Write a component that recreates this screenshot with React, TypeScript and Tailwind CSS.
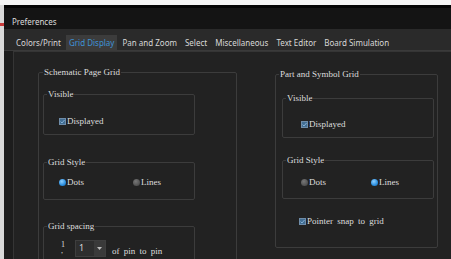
import React from "react";

const serif = { fontFamily: '"Liberation Serif", "Times New Roman", serif' };
const sans = { fontFamily: '"Noto Sans", "Liberation Sans", sans-serif' };

function Check() {
  return (
    <span className="flex h-[7px] w-[7px] shrink-0 items-center justify-center border border-[#6f8ca8] bg-[#416d92]">
      <svg width="5" height="5" viewBox="0 0 5 5">
        <path d="M0.6 2.6 L2 4 L4.5 1" stroke="#8fb8dc" strokeWidth="0.9" fill="none" />
      </svg>
    </span>
  );
}

function Radio({ on }: { on: boolean }) {
  return on ? (
    <span className="h-[7px] w-[7px] shrink-0 rounded-full bg-[radial-gradient(circle_at_40%_35%,#8fd0ff,#2a8ee0_60%,#1c6db0)]" />
  ) : (
    <span className="h-[7px] w-[7px] shrink-0 rounded-full bg-[radial-gradient(circle_at_40%_35%,#777,#555_60%,#444)]" />
  );
}

function Box({
  title,
  className,
  legendClass = "ml-[3px]",
  children,
}: {
  title: string;
  className: string;
  legendClass?: string;
  children?: React.ReactNode;
}) {
  return (
    <fieldset className={`rounded-[2px] border border-[#3c3c3c] ${className}`}>
      <legend className={`${legendClass} px-[1px] text-[9px] leading-[10px] text-[#dedede]`} style={serif}>
        {title}
      </legend>
      {children}
    </fieldset>
  );
}

function Label({ children }: { children: React.ReactNode }) {
  return (
    <span className="text-[9px] leading-[10px] text-[#dedede] [word-spacing:2px]" style={serif}>
      {children}
    </span>
  );
}

export default function App() {
  const tabs = [
    "Colors/Print",
    "Grid Display",
    "Pan and Zoom",
    "Select",
    "Miscellaneous",
    "Text Editor",
    "Board Simulation",
  ];
  return (
    <div className="flex h-[259px] w-[451px] flex-col overflow-hidden bg-[#f3f3f3]">
      <div className="h-[5px] shrink-0 bg-[#f5f5f5]" />
      <div className="flex min-h-0 flex-1">
        <div className="flex w-[4px] shrink-0 flex-col bg-[#d9d9d9] pt-[18px]">
          <div className="h-[3px] bg-[#c83a3a]" />
        </div>
        <div className="flex min-w-0 flex-1 flex-col border-t-[3px] border-[#050505]">
          <div className="flex h-[21px] shrink-0 items-center bg-[#141414] pl-[8px] pt-[6px]">
            <span className="text-[8px] leading-[12px] text-[#dcdcdc]" style={sans}>
              Preferences
            </span>
          </div>
          <div className="flex h-[22px] shrink-0 items-end gap-[2px] border-b border-[#3a3a3a] bg-[#2a2a2a] pl-[9px]">
            {tabs.map((t) =>
              t === "Grid Display" ? (
                <div
                  key={t}
                  className="flex h-[15px] items-center bg-[#3c3c3c] px-[3px] text-[8px] text-[#3f93d6]"
                  style={sans}
                >
                  {t}
                </div>
              ) : (
                <div key={t} className="flex h-[15px] items-center px-[3px] text-[8px] text-[#d8d8d8]" style={sans}>
                  {t}
                </div>
              )
            )}
          </div>
          <div className="flex min-h-0 flex-1 bg-[#1d1d1d] pl-[9px]">
            <div className="flex min-w-0 flex-1 items-start border-l border-t border-[#353535] bg-[#222222]">
              <Box
                title="Schematic Page Grid"
                legendClass="ml-[4px]"
                className="ml-[24px] mt-[15px] h-[230px] w-[199px] shrink-0"
              >
                <Box title="Visible" className="ml-[4px] mt-[12px] h-[46px] w-[152px]">
                  <div className="ml-[15px] mt-[15px] flex h-[14px] items-center gap-[1px]">
                    <Check />
                    <Label>Displayed</Label>
                  </div>
                </Box>
                <Box title="Grid Style" className="ml-[4px] mt-[22px] h-[43px] w-[152px]">
                  <div className="ml-[15px] mt-[8px] flex h-[14px] items-center">
                    <div className="flex w-[74px] items-center gap-[1px]">
                      <Radio on />
                      <Label>Dots</Label>
                    </div>
                    <div className="flex items-center gap-[1px]">
                      <Radio on={false} />
                      <Label>Lines</Label>
                    </div>
                  </div>
                </Box>
                <Box title="Grid spacing" className="ml-[4px] mt-[21px] h-[50px] w-[152px]">
                  <div className="mt-[5px] flex items-center">
                    <div
                      className="ml-[17px] w-[14px] whitespace-pre-line text-[8px] leading-[6px] text-[#dedede]"
                      style={serif}
                    >
                      {"1\n,"}
                    </div>
                    <div className="flex h-[17px] w-[31px] items-stretch border border-[#3e3e3e] bg-[#2e2e2e]">
                      <div className="flex flex-1 items-center pl-[3px] text-[9px] text-[#d8d8d8]" style={sans}>
                        1
                      </div>
                      <div className="flex w-[11px] items-center justify-center bg-[#3a3a3a]">
                        <svg width="5" height="3" viewBox="0 0 5 3">
                          <path d="M0 0 L5 0 L2.5 3 Z" fill="#bdbdbd" />
                        </svg>
                      </div>
                    </div>
                    <span className="ml-[6px]">
                      <Label>of pin to pin</Label>
                    </span>
                  </div>
                </Box>
              </Box>
              <Box title="Part and Symbol Grid" className="ml-[38px] mt-[17px] h-[179px] w-[163px] shrink-0">
                <Box title="Visible" className="ml-[6px] mt-[14px] h-[45px] w-[152px]">
                  <div className="ml-[18px] mt-[14px] flex h-[14px] items-center gap-[1px]">
                    <Check />
                    <Label>Displayed</Label>
                  </div>
                </Box>
                <Box title="Grid Style" className="ml-[6px] mt-[17px] h-[44px] w-[152px]">
                  <div className="ml-[18px] mt-[10px] flex h-[14px] items-center">
                    <div className="flex w-[70px] items-center gap-[1px]">
                      <Radio on={false} />
                      <Label>Dots</Label>
                    </div>
                    <div className="flex items-center gap-[1px]">
                      <Radio on />
                      <Label>Lines</Label>
                    </div>
                  </div>
                </Box>
                <div className="ml-[23px] mt-[15px] flex h-[14px] items-center gap-[1px]">
                  <Check />
                  <Label>Pointer snap to grid</Label>
                </div>
              </Box>
            </div>
          </div>
        </div>
      </div>
    </div>
  );
}
